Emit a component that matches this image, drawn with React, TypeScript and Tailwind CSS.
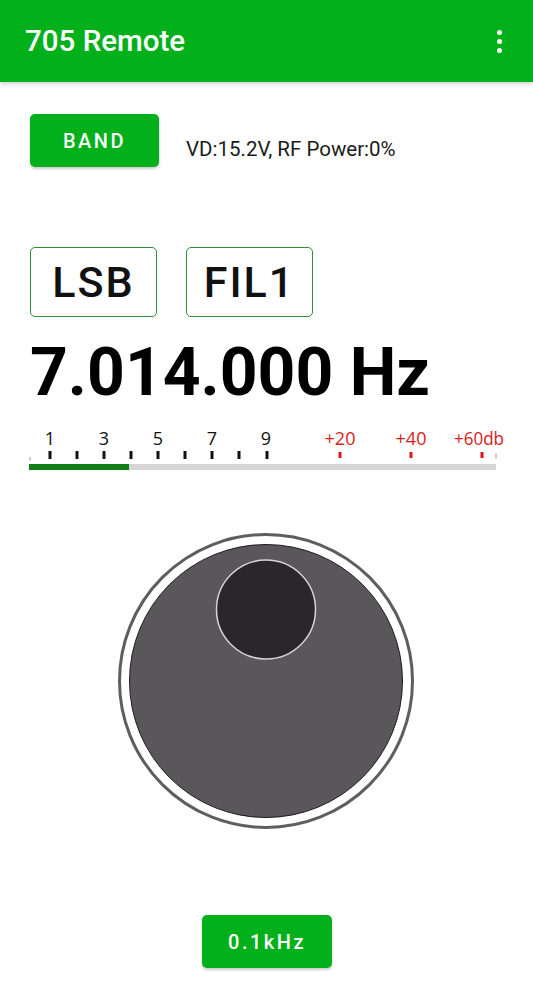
import React from "react";

const GREEN = "#02b01b";

function Meter() {
  const black = [50, 77, 104, 131, 158, 185, 212, 239, 267];
  const labels: [string, number][] = [
    ["1", 50],
    ["3", 104],
    ["5", 158],
    ["7", 212],
    ["9", 266],
  ];
  const reds: [string, number][] = [
    ["+20", 340],
    ["+40", 411],
  ];
  return (
    <svg width="533" height="52" viewBox="0 -6 533 52" className="block">
      <g style={{ fontFamily: '"Open Sans", "DejaVu Sans", sans-serif' }} fontSize="18">
        {labels.map(([t, x]) => (
          <text key={t} x={x} y="17" textAnchor="middle" fill="#111">
            {t}
          </text>
        ))}
        {reds.map(([t, x]) => (
          <text key={t} x={x} y="17" textAnchor="middle" fill="#d91c1c">
            {t}
          </text>
        ))}
        <text x="454" y="17" fill="#d91c1c" textLength="50" lengthAdjust="spacingAndGlyphs">
          +60db
        </text>
      </g>
      <rect x="29.5" y="29" width="1" height="3.5" fill="#999" />
      {black.map((x) => (
        <rect key={x} x={x - 1.5} y="23" width="3" height="8" fill="#111" />
      ))}
      {[340, 411, 482].map((x) => (
        <rect key={x} x={x - 1.5} y="24" width="3" height="6" fill="#e0141b" />
      ))}
      <rect x="495.5" y="25" width="1" height="6" fill="#e89090" />
      <rect x="29" y="36" width="467" height="6" fill="#d6d6d6" />
      <rect x="29" y="36" width="100" height="6" fill="#137f1b" />
    </svg>
  );
}

function Knob() {
  return (
    <svg width="300" height="300" viewBox="0 0 300 300" className="block">
      <circle cx="150" cy="150" r="146.5" fill="#ffffff" stroke="#5e5e5e" strokeWidth="3" />
      <circle cx="150" cy="150" r="136.5" fill="#5a575a" stroke="#1c1c1c" strokeWidth="1" />
      <circle cx="150" cy="78.5" r="49.5" fill="#2a272a" stroke="#d4d4d4" strokeWidth="1.5" />
    </svg>
  );
}

export default function App() {
  const roboto = { fontFamily: 'Roboto, "Liberation Sans", sans-serif' };
  return (
    <div className="w-[533px] h-[1000px] bg-white overflow-hidden" style={roboto}>
      <header
        className="h-[82px] flex items-center justify-between pl-[25px] pr-[31px] shadow-[0_2px_4px_rgba(0,0,0,0.18)]"
        style={{ backgroundColor: GREEN }}
      >
        <h1 className="text-white text-[29.5px] font-medium leading-none mt-[2px]">705 Remote</h1>
        <div className="flex flex-col gap-[4px] items-center">
          <span className="block w-[5px] h-[5px] rounded-full bg-white" />
          <span className="block w-[5px] h-[5px] rounded-full bg-white" />
          <span className="block w-[5px] h-[5px] rounded-full bg-white" />
        </div>
      </header>

      <div className="px-[30px]">
        <div className="mt-[32px] flex items-center">
          <button
            className="w-[129px] h-[53px] rounded-[5px] text-white text-[20px] font-medium tracking-[2.5px] shadow-[0_2px_3px_rgba(0,0,0,0.2)]"
            style={{ backgroundColor: GREEN }}
          >
            BAND
          </button>
          <span className="ml-[27px] mt-[18px] text-[20.5px] text-[#1a1a1a]">VD:15.2V, RF Power:0%</span>
        </div>

        <div className="mt-[80px] flex gap-[29px]">
          <div className="w-[127px] h-[70px] rounded-[5px] border-[1.5px] border-[#2f8f35] flex items-center justify-center text-[43px] font-medium tracking-[2px] text-[#111] leading-none">
            LSB
          </div>
          <div className="w-[127px] h-[70px] rounded-[5px] border-[1.5px] border-[#2f8f35] flex items-center justify-center text-[43px] font-medium tracking-[2px] text-[#111] leading-none">
            FIL1
          </div>
        </div>

        <div className="mt-[23px] h-[67px] text-[66px] font-bold leading-none text-black whitespace-nowrap">
          7.014.000 Hz
        </div>
      </div>

      <div className="mt-[15px]">
        <Meter />
      </div>

      <div className="mt-[57px] flex justify-center">
        <div className="ml-[-1px]">
          <Knob />
        </div>
      </div>

      <div className="mt-[84px] flex justify-center">
        <button
          className="w-[130px] h-[53px] rounded-[5px] text-white text-[20px] font-medium tracking-[2.5px] shadow-[0_2px_3px_rgba(0,0,0,0.2)] ml-[1px]"
          style={{ backgroundColor: GREEN }}
        >
          0.1kHz
        </button>
      </div>
    </div>
  );
}
